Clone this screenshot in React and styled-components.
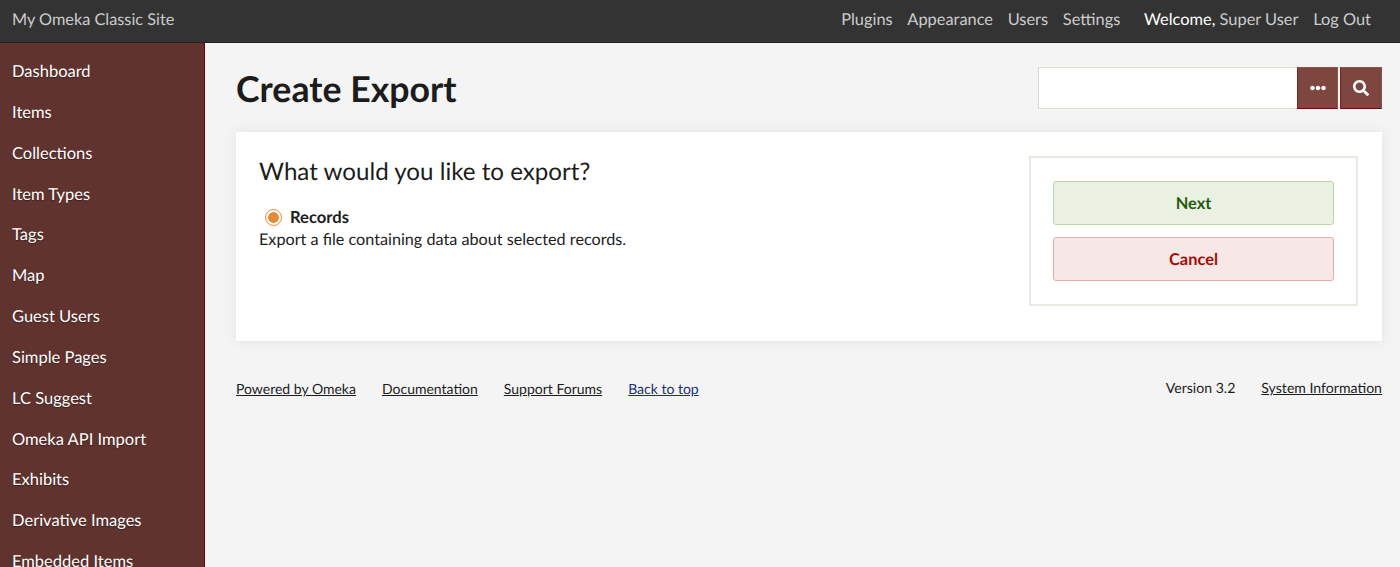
import React from "react";
import styled, { createGlobalStyle } from "styled-components";
import { FaEllipsisH, FaSearch } from "react-icons/fa";

const Global = createGlobalStyle`
  html, body {
    margin: 0;
    height: 100%;
    overflow: hidden;
    background: #f4f4f4;
    font-family: Lato, "Liberation Sans", sans-serif;
    color: #1c1c1c;
    text-rendering: geometricPrecision;
  }
  * { box-sizing: border-box; }
`;

const Page = styled.div`
  height: 100vh;
  display: grid;
  grid-template-rows: 43px 1fr;
  overflow: hidden;
`;

const TopBar = styled.header`
  display: flex;
  align-items: center;
  justify-content: space-between;
  padding: 0 29px 5px 12px;
  background: #333;
  box-shadow: inset 0 -1px 0 #222;
  font-size: 16.4px;
  color: #ccc;
`;

const SiteName = styled.a`
  color: #ccc;
  font-size: 16.3px;
`;

const TopNav = styled.nav`
  display: flex;
  gap: 14.7px;
`;

const TopLink = styled.a`
  color: #ccc;
`;

const Welcome = styled.span`
  color: #fff;
  margin-left: 9px;
`;

const Body = styled.div`
  display: grid;
  grid-template-columns: 205px 1fr;
  overflow: hidden;
`;

const Sidebar = styled.nav`
  background: #60332f;
  border-right: 1px solid #700000;
  padding-top: 8px;
  display: flex;
  flex-direction: column;
  overflow: hidden;
`;

const SideLink = styled.a`
  flex: none;
  height: 40.85px;
  line-height: 40.85px;
  padding-left: 12px;
  color: #fff;
  font-size: 16.5px;
  white-space: nowrap;
  text-shadow: 0 1px 1px rgba(0, 0, 0, 0.4);
`;

const Main = styled.main`
  padding: 0 18px 0 31px;
`;

const TitleRow = styled.div`
  height: 89px;
  display: flex;
  align-items: flex-start;
  justify-content: space-between;
`;

const Title = styled.h1`
  margin: 23px 0 0;
  font-size: 35.7px;
  line-height: 46px;
  font-weight: 700;
  color: #1c1c1c;
`;

const Search = styled.form`
  margin-top: 24px;
  display: flex;
`;

const SearchInput = styled.input`
  width: 259px;
  height: 42px;
  border: 1px solid #dcdccb;
  border-right: 0;
  background: #fff;
  padding: 0 8px;
`;

const IconButton = styled.button`
  width: ${(p) => p.$w}px;
  height: 42px;
  margin-left: ${(p) => p.$gap || 0}px;
  padding: 0;
  display: flex;
  align-items: center;
  justify-content: center;
  background: #7d4740;
  border: 1px solid #8f5048;
  border-left-color: #74251e;
  border-bottom-color: #6c0b06;
  color: #fff;
  font-size: 16px;
`;

const Card = styled.section`
  height: 209px;
  background: #fff;
  box-shadow: 0 0 12px rgba(0, 0, 0, 0.08);
  padding: 24px 24px 0 23px;
  display: flex;
  justify-content: space-between;
  align-items: flex-start;
`;

const Heading = styled.h2`
  margin: 1px 0 18px;
  font-size: 24.15px;
  line-height: 30px;
  font-weight: 400;
  color: #1c1c1c;
`;

const RadioRow = styled.label`
  display: flex;
  align-items: center;
  height: 24px;
  padding-left: 6px;
  font-size: 16.6px;
  font-weight: 700;
`;

const Radio = styled.span`
  width: 17px;
  height: 17px;
  margin-right: 8px;
  border-radius: 50%;
  border: 1px solid #e88a34;
  background: radial-gradient(circle, #e88a34 0 5px, #fff 5.6px);
`;

const Hint = styled.p`
  margin: 0;
  font-size: 16.2px;
  line-height: 22px;
`;

const SidePanel = styled.aside`
  width: 329px;
  height: 150px;
  border: 2px solid #eaeae3;
  padding: 23px 22px 0;
  display: flex;
  flex-direction: column;
  gap: 12px;
`;

const ActionButton = styled.button`
  height: 44px;
  border-radius: 3px;
  font-family: inherit;
  font-size: 16.4px;
  font-weight: 700;
  text-rendering: geometricPrecision;
  color: ${(p) => (p.$tone === "green" ? "#245a0e" : "#a80b06")};
  background: ${(p) => (p.$tone === "green" ? "#eaf1e2" : "#f7e8e7")};
  border: 1px solid ${(p) => (p.$tone === "green" ? "#bfd3a9" : "#e2aeaa")};
`;

const Footer = styled.footer`
  margin-top: 38px;
  display: flex;
  justify-content: space-between;
  font-size: 14px;
  line-height: 20px;
`;

const FooterGroup = styled.div`
  display: flex;
  gap: 26px;
  font-size: ${(p) => (p.$wide ? "14.1px" : "14px")};
`;

const FooterLink = styled.a`
  color: ${(p) => (p.$blue ? "#1a2e7a" : "#1c1c1c")};
  text-decoration: underline;
`;

const sideItems = [
  "Dashboard",
  "Items",
  "Collections",
  "Item Types",
  "Tags",
  "Map",
  "Guest Users",
  "Simple Pages",
  "LC Suggest",
  "Omeka API Import",
  "Exhibits",
  "Derivative Images",
  "Embedded Items",
];

export default function App() {
  return (
    <Page>
      <Global />
      <TopBar>
        <SiteName>My Omeka Classic Site</SiteName>
        <TopNav>
          <TopLink>Plugins</TopLink>
          <TopLink>Appearance</TopLink>
          <TopLink>Users</TopLink>
          <TopLink>Settings</TopLink>
          <span>
            <Welcome>Welcome,</Welcome> Super User
          </span>
          <TopLink>Log Out</TopLink>
        </TopNav>
      </TopBar>
      <Body>
        <Sidebar>
          {sideItems.map((item) => (
            <SideLink key={item}>{item}</SideLink>
          ))}
        </Sidebar>
        <Main>
          <TitleRow>
            <Title>Create Export</Title>
            <Search>
              <SearchInput />
              <IconButton type="button" $w={41}>
                <FaEllipsisH />
              </IconButton>
              <IconButton type="button" $w={42} $gap={2}>
                <FaSearch />
              </IconButton>
            </Search>
          </TitleRow>
          <Card>
            <div>
              <Heading>What would you like to export?</Heading>
              <RadioRow>
                <Radio />
                Records
              </RadioRow>
              <Hint>Export a file containing data about selected records.</Hint>
            </div>
            <SidePanel>
              <ActionButton $tone="green">Next</ActionButton>
              <ActionButton $tone="red">Cancel</ActionButton>
            </SidePanel>
          </Card>
          <Footer>
            <FooterGroup>
              <FooterLink>Powered by Omeka</FooterLink>
              <FooterLink>Documentation</FooterLink>
              <FooterLink>Support Forums</FooterLink>
              <FooterLink $blue>Back to top</FooterLink>
            </FooterGroup>
            <FooterGroup $wide>
              <span>Version 3.2</span>
              <FooterLink>System Information</FooterLink>
            </FooterGroup>
          </Footer>
        </Main>
      </Body>
    </Page>
  );
}
